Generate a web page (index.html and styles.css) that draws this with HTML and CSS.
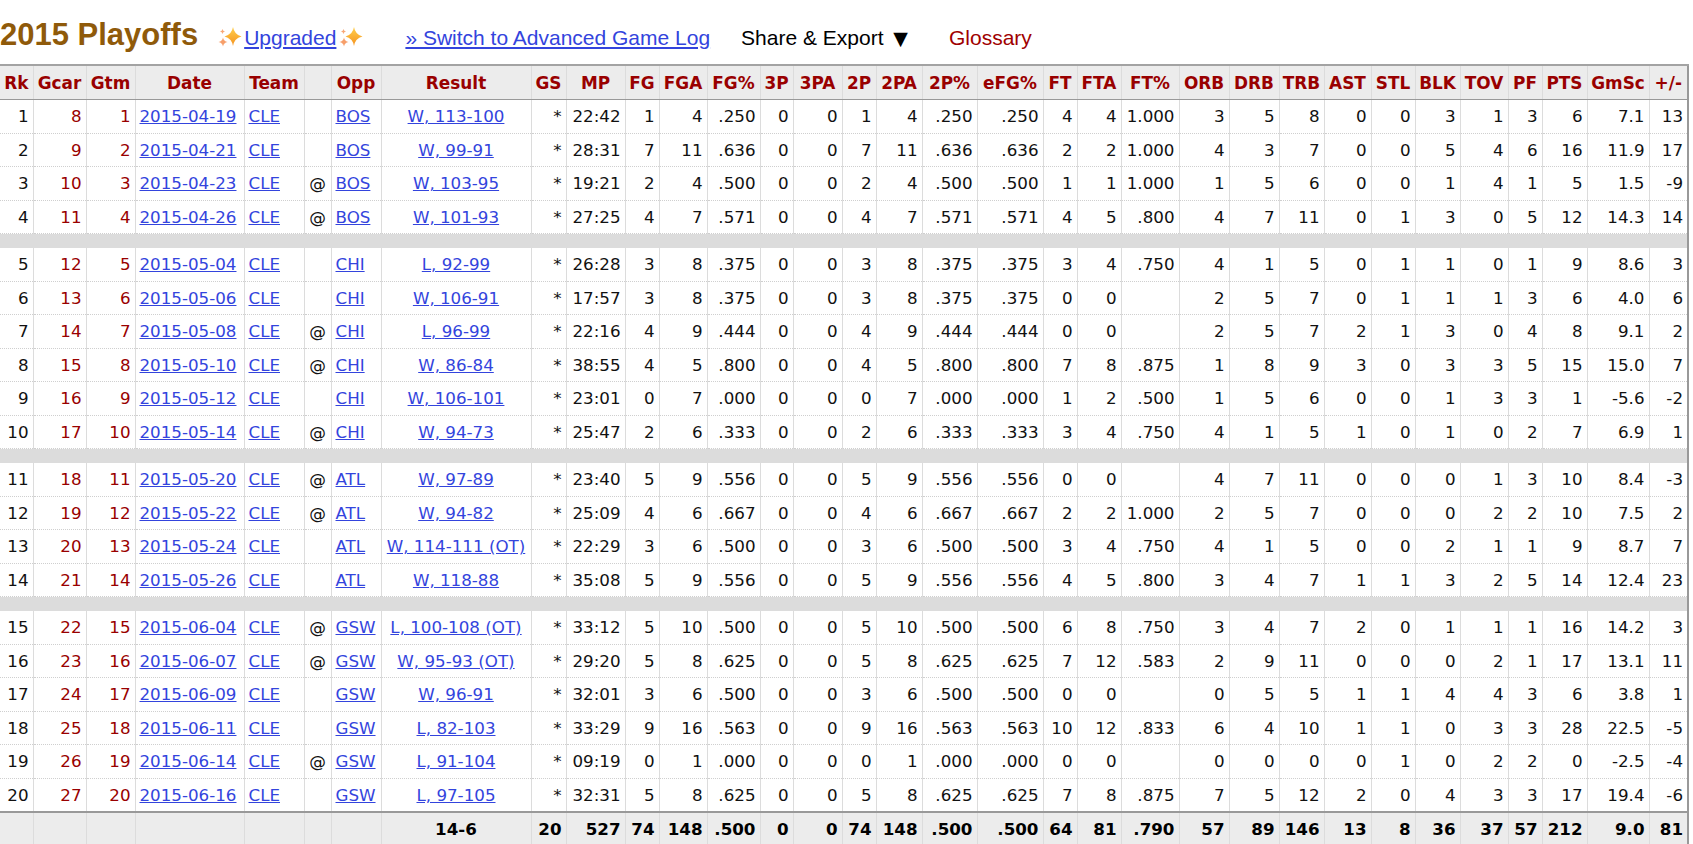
FILE: index.html
```html
<!DOCTYPE html>
<html lang="en">
<head>
<meta charset="utf-8">
<title>2015 Playoffs Game Log</title>
<link rel="stylesheet" href="styles.css">
</head>
<body>
<div class="top">
  <h1 class="title">2015 Playoffs</h1>
  <span class="upg">
    <svg class="spark" viewBox="0 0 24 20" width="24" height="20" aria-hidden="true">
      <defs>
        <linearGradient id="sg1" x1="0" y1="0" x2="0" y2="1">
          <stop offset="0" stop-color="#ffd04d"/>
          <stop offset="1" stop-color="#f5921f"/>
        </linearGradient>
      </defs>
      <path d="M15 0 Q16.3 7.7 23.5 9.5 Q16.3 11.3 15 19 Q13.7 11.3 6.5 9.5 Q13.7 7.7 15 0Z" fill="url(#sg1)"/>
      <path d="M5 10.5 Q5.7 14.3 9.5 15 Q5.7 15.7 5 19.5 Q4.3 15.7 0.5 15 Q4.3 14.3 5 10.5Z" fill="#f79f6a"/>
      <path d="M4.5 2 Q4.9 4.1 7 4.5 Q4.9 4.9 4.5 7 Q4.1 4.9 2 4.5 Q4.1 4.1 4.5 2Z" fill="#f8a877"/>
    </svg><a href="#" class="lnk">Upgraded</a><svg class="spark sp2" viewBox="0 0 24 20" width="24" height="20" aria-hidden="true">
      <path d="M15 0 Q16.3 7.7 23.5 9.5 Q16.3 11.3 15 19 Q13.7 11.3 6.5 9.5 Q13.7 7.7 15 0Z" fill="url(#sg1)"/>
      <path d="M5 10.5 Q5.7 14.3 9.5 15 Q5.7 15.7 5 19.5 Q4.3 15.7 0.5 15 Q4.3 14.3 5 10.5Z" fill="#f79f6a"/>
      <path d="M4.5 2 Q4.9 4.1 7 4.5 Q4.9 4.9 4.5 7 Q4.1 4.9 2 4.5 Q4.1 4.1 4.5 2Z" fill="#f8a877"/>
    </svg>
  </span>
  <a href="#" class="lnk switch">» Switch to Advanced Game Log</a>
  <span class="share">Share &amp; Export <span class="tri">▼</span></span>
  <a href="#" class="gloss">Glossary</a>
</div>

<table class="log">
<colgroup>
<col style="width:33px"><col style="width:53px"><col style="width:49px"><col style="width:109px"><col style="width:60px"><col style="width:27px"><col style="width:50px"><col style="width:150px"><col style="width:35px"><col style="width:59px"><col style="width:34px"><col style="width:48px"><col style="width:53px"><col style="width:33px"><col style="width:49px"><col style="width:34px"><col style="width:46px"><col style="width:55px"><col style="width:66px"><col style="width:34px"><col style="width:44px"><col style="width:58px"><col style="width:50px"><col style="width:50px"><col style="width:45px"><col style="width:47px"><col style="width:44px"><col style="width:45px"><col style="width:48px"><col style="width:34px"><col style="width:45px"><col style="width:62px"><col style="width:39px">
</colgroup>
<thead>
<tr><th>Rk</th><th>Gcar</th><th>Gtm</th><th>Date</th><th>Team</th><th></th><th>Opp</th><th>Result</th><th>GS</th><th>MP</th><th>FG</th><th>FGA</th><th>FG%</th><th>3P</th><th>3PA</th><th>2P</th><th>2PA</th><th>2P%</th><th>eFG%</th><th>FT</th><th>FTA</th><th>FT%</th><th>ORB</th><th>DRB</th><th>TRB</th><th>AST</th><th>STL</th><th>BLK</th><th>TOV</th><th>PF</th><th>PTS</th><th>GmSc</th><th>+/-</th></tr>
</thead>
<tbody>
<tr><td>1</td><td>8</td><td>1</td><td><a href="#">2015-04-19</a></td><td><a href="#">CLE</a></td><td></td><td><a href="#">BOS</a></td><td><a href="#">W, 113-100</a></td><td>*</td><td>22:42</td><td>1</td><td>4</td><td>.250</td><td>0</td><td>0</td><td>1</td><td>4</td><td>.250</td><td>.250</td><td>4</td><td>4</td><td>1.000</td><td>3</td><td>5</td><td>8</td><td>0</td><td>0</td><td>3</td><td>1</td><td>3</td><td>6</td><td>7.1</td><td>13</td></tr>
<tr><td>2</td><td>9</td><td>2</td><td><a href="#">2015-04-21</a></td><td><a href="#">CLE</a></td><td></td><td><a href="#">BOS</a></td><td><a href="#">W, 99-91</a></td><td>*</td><td>28:31</td><td>7</td><td>11</td><td>.636</td><td>0</td><td>0</td><td>7</td><td>11</td><td>.636</td><td>.636</td><td>2</td><td>2</td><td>1.000</td><td>4</td><td>3</td><td>7</td><td>0</td><td>0</td><td>5</td><td>4</td><td>6</td><td>16</td><td>11.9</td><td>17</td></tr>
<tr><td>3</td><td>10</td><td>3</td><td><a href="#">2015-04-23</a></td><td><a href="#">CLE</a></td><td>@</td><td><a href="#">BOS</a></td><td><a href="#">W, 103-95</a></td><td>*</td><td>19:21</td><td>2</td><td>4</td><td>.500</td><td>0</td><td>0</td><td>2</td><td>4</td><td>.500</td><td>.500</td><td>1</td><td>1</td><td>1.000</td><td>1</td><td>5</td><td>6</td><td>0</td><td>0</td><td>1</td><td>4</td><td>1</td><td>5</td><td>1.5</td><td>-9</td></tr>
<tr><td>4</td><td>11</td><td>4</td><td><a href="#">2015-04-26</a></td><td><a href="#">CLE</a></td><td>@</td><td><a href="#">BOS</a></td><td><a href="#">W, 101-93</a></td><td>*</td><td>27:25</td><td>4</td><td>7</td><td>.571</td><td>0</td><td>0</td><td>4</td><td>7</td><td>.571</td><td>.571</td><td>4</td><td>5</td><td>.800</td><td>4</td><td>7</td><td>11</td><td>0</td><td>1</td><td>3</td><td>0</td><td>5</td><td>12</td><td>14.3</td><td>14</td></tr>
<tr class="sp"><td colspan="33"></td></tr>
<tr><td>5</td><td>12</td><td>5</td><td><a href="#">2015-05-04</a></td><td><a href="#">CLE</a></td><td></td><td><a href="#">CHI</a></td><td><a href="#">L, 92-99</a></td><td>*</td><td>26:28</td><td>3</td><td>8</td><td>.375</td><td>0</td><td>0</td><td>3</td><td>8</td><td>.375</td><td>.375</td><td>3</td><td>4</td><td>.750</td><td>4</td><td>1</td><td>5</td><td>0</td><td>1</td><td>1</td><td>0</td><td>1</td><td>9</td><td>8.6</td><td>3</td></tr>
<tr><td>6</td><td>13</td><td>6</td><td><a href="#">2015-05-06</a></td><td><a href="#">CLE</a></td><td></td><td><a href="#">CHI</a></td><td><a href="#">W, 106-91</a></td><td>*</td><td>17:57</td><td>3</td><td>8</td><td>.375</td><td>0</td><td>0</td><td>3</td><td>8</td><td>.375</td><td>.375</td><td>0</td><td>0</td><td></td><td>2</td><td>5</td><td>7</td><td>0</td><td>1</td><td>1</td><td>1</td><td>3</td><td>6</td><td>4.0</td><td>6</td></tr>
<tr><td>7</td><td>14</td><td>7</td><td><a href="#">2015-05-08</a></td><td><a href="#">CLE</a></td><td>@</td><td><a href="#">CHI</a></td><td><a href="#">L, 96-99</a></td><td>*</td><td>22:16</td><td>4</td><td>9</td><td>.444</td><td>0</td><td>0</td><td>4</td><td>9</td><td>.444</td><td>.444</td><td>0</td><td>0</td><td></td><td>2</td><td>5</td><td>7</td><td>2</td><td>1</td><td>3</td><td>0</td><td>4</td><td>8</td><td>9.1</td><td>2</td></tr>
<tr><td>8</td><td>15</td><td>8</td><td><a href="#">2015-05-10</a></td><td><a href="#">CLE</a></td><td>@</td><td><a href="#">CHI</a></td><td><a href="#">W, 86-84</a></td><td>*</td><td>38:55</td><td>4</td><td>5</td><td>.800</td><td>0</td><td>0</td><td>4</td><td>5</td><td>.800</td><td>.800</td><td>7</td><td>8</td><td>.875</td><td>1</td><td>8</td><td>9</td><td>3</td><td>0</td><td>3</td><td>3</td><td>5</td><td>15</td><td>15.0</td><td>7</td></tr>
<tr><td>9</td><td>16</td><td>9</td><td><a href="#">2015-05-12</a></td><td><a href="#">CLE</a></td><td></td><td><a href="#">CHI</a></td><td><a href="#">W, 106-101</a></td><td>*</td><td>23:01</td><td>0</td><td>7</td><td>.000</td><td>0</td><td>0</td><td>0</td><td>7</td><td>.000</td><td>.000</td><td>1</td><td>2</td><td>.500</td><td>1</td><td>5</td><td>6</td><td>0</td><td>0</td><td>1</td><td>3</td><td>3</td><td>1</td><td>-5.6</td><td>-2</td></tr>
<tr><td>10</td><td>17</td><td>10</td><td><a href="#">2015-05-14</a></td><td><a href="#">CLE</a></td><td>@</td><td><a href="#">CHI</a></td><td><a href="#">W, 94-73</a></td><td>*</td><td>25:47</td><td>2</td><td>6</td><td>.333</td><td>0</td><td>0</td><td>2</td><td>6</td><td>.333</td><td>.333</td><td>3</td><td>4</td><td>.750</td><td>4</td><td>1</td><td>5</td><td>1</td><td>0</td><td>1</td><td>0</td><td>2</td><td>7</td><td>6.9</td><td>1</td></tr>
<tr class="sp"><td colspan="33"></td></tr>
<tr><td>11</td><td>18</td><td>11</td><td><a href="#">2015-05-20</a></td><td><a href="#">CLE</a></td><td>@</td><td><a href="#">ATL</a></td><td><a href="#">W, 97-89</a></td><td>*</td><td>23:40</td><td>5</td><td>9</td><td>.556</td><td>0</td><td>0</td><td>5</td><td>9</td><td>.556</td><td>.556</td><td>0</td><td>0</td><td></td><td>4</td><td>7</td><td>11</td><td>0</td><td>0</td><td>0</td><td>1</td><td>3</td><td>10</td><td>8.4</td><td>-3</td></tr>
<tr><td>12</td><td>19</td><td>12</td><td><a href="#">2015-05-22</a></td><td><a href="#">CLE</a></td><td>@</td><td><a href="#">ATL</a></td><td><a href="#">W, 94-82</a></td><td>*</td><td>25:09</td><td>4</td><td>6</td><td>.667</td><td>0</td><td>0</td><td>4</td><td>6</td><td>.667</td><td>.667</td><td>2</td><td>2</td><td>1.000</td><td>2</td><td>5</td><td>7</td><td>0</td><td>0</td><td>0</td><td>2</td><td>2</td><td>10</td><td>7.5</td><td>2</td></tr>
<tr><td>13</td><td>20</td><td>13</td><td><a href="#">2015-05-24</a></td><td><a href="#">CLE</a></td><td></td><td><a href="#">ATL</a></td><td><a href="#">W, 114-111 (OT)</a></td><td>*</td><td>22:29</td><td>3</td><td>6</td><td>.500</td><td>0</td><td>0</td><td>3</td><td>6</td><td>.500</td><td>.500</td><td>3</td><td>4</td><td>.750</td><td>4</td><td>1</td><td>5</td><td>0</td><td>0</td><td>2</td><td>1</td><td>1</td><td>9</td><td>8.7</td><td>7</td></tr>
<tr><td>14</td><td>21</td><td>14</td><td><a href="#">2015-05-26</a></td><td><a href="#">CLE</a></td><td></td><td><a href="#">ATL</a></td><td><a href="#">W, 118-88</a></td><td>*</td><td>35:08</td><td>5</td><td>9</td><td>.556</td><td>0</td><td>0</td><td>5</td><td>9</td><td>.556</td><td>.556</td><td>4</td><td>5</td><td>.800</td><td>3</td><td>4</td><td>7</td><td>1</td><td>1</td><td>3</td><td>2</td><td>5</td><td>14</td><td>12.4</td><td>23</td></tr>
<tr class="sp"><td colspan="33"></td></tr>
<tr><td>15</td><td>22</td><td>15</td><td><a href="#">2015-06-04</a></td><td><a href="#">CLE</a></td><td>@</td><td><a href="#">GSW</a></td><td><a href="#">L, 100-108 (OT)</a></td><td>*</td><td>33:12</td><td>5</td><td>10</td><td>.500</td><td>0</td><td>0</td><td>5</td><td>10</td><td>.500</td><td>.500</td><td>6</td><td>8</td><td>.750</td><td>3</td><td>4</td><td>7</td><td>2</td><td>0</td><td>1</td><td>1</td><td>1</td><td>16</td><td>14.2</td><td>3</td></tr>
<tr><td>16</td><td>23</td><td>16</td><td><a href="#">2015-06-07</a></td><td><a href="#">CLE</a></td><td>@</td><td><a href="#">GSW</a></td><td><a href="#">W, 95-93 (OT)</a></td><td>*</td><td>29:20</td><td>5</td><td>8</td><td>.625</td><td>0</td><td>0</td><td>5</td><td>8</td><td>.625</td><td>.625</td><td>7</td><td>12</td><td>.583</td><td>2</td><td>9</td><td>11</td><td>0</td><td>0</td><td>0</td><td>2</td><td>1</td><td>17</td><td>13.1</td><td>11</td></tr>
<tr><td>17</td><td>24</td><td>17</td><td><a href="#">2015-06-09</a></td><td><a href="#">CLE</a></td><td></td><td><a href="#">GSW</a></td><td><a href="#">W, 96-91</a></td><td>*</td><td>32:01</td><td>3</td><td>6</td><td>.500</td><td>0</td><td>0</td><td>3</td><td>6</td><td>.500</td><td>.500</td><td>0</td><td>0</td><td></td><td>0</td><td>5</td><td>5</td><td>1</td><td>1</td><td>4</td><td>4</td><td>3</td><td>6</td><td>3.8</td><td>1</td></tr>
<tr><td>18</td><td>25</td><td>18</td><td><a href="#">2015-06-11</a></td><td><a href="#">CLE</a></td><td></td><td><a href="#">GSW</a></td><td><a href="#">L, 82-103</a></td><td>*</td><td>33:29</td><td>9</td><td>16</td><td>.563</td><td>0</td><td>0</td><td>9</td><td>16</td><td>.563</td><td>.563</td><td>10</td><td>12</td><td>.833</td><td>6</td><td>4</td><td>10</td><td>1</td><td>1</td><td>0</td><td>3</td><td>3</td><td>28</td><td>22.5</td><td>-5</td></tr>
<tr><td>19</td><td>26</td><td>19</td><td><a href="#">2015-06-14</a></td><td><a href="#">CLE</a></td><td>@</td><td><a href="#">GSW</a></td><td><a href="#">L, 91-104</a></td><td>*</td><td>09:19</td><td>0</td><td>1</td><td>.000</td><td>0</td><td>0</td><td>0</td><td>1</td><td>.000</td><td>.000</td><td>0</td><td>0</td><td></td><td>0</td><td>0</td><td>0</td><td>0</td><td>1</td><td>0</td><td>2</td><td>2</td><td>0</td><td>-2.5</td><td>-4</td></tr>
<tr><td>20</td><td>27</td><td>20</td><td><a href="#">2015-06-16</a></td><td><a href="#">CLE</a></td><td></td><td><a href="#">GSW</a></td><td><a href="#">L, 97-105</a></td><td>*</td><td>32:31</td><td>5</td><td>8</td><td>.625</td><td>0</td><td>0</td><td>5</td><td>8</td><td>.625</td><td>.625</td><td>7</td><td>8</td><td>.875</td><td>7</td><td>5</td><td>12</td><td>2</td><td>0</td><td>4</td><td>3</td><td>3</td><td>17</td><td>19.4</td><td>-6</td></tr>
</tbody>
<tfoot>
<tr><td></td><td></td><td></td><td></td><td></td><td></td><td></td><td>14-6</td><td>20</td><td>527</td><td>74</td><td>148</td><td>.500</td><td>0</td><td>0</td><td>74</td><td>148</td><td>.500</td><td>.500</td><td>64</td><td>81</td><td>.790</td><td>57</td><td>89</td><td>146</td><td>13</td><td>8</td><td>36</td><td>37</td><td>57</td><td>212</td><td>9.0</td><td>81</td></tr>
</tfoot>
</table>
</body>
</html>
```

FILE: styles.css
```css
html, body {
  margin: 0;
  padding: 0;
  background: #fff;
}

body {
  font-family: "Liberation Sans", Arial, sans-serif;
  color: #000;
}

/* ---------- top bar ---------- */
.top {
  display: flex;
  align-items: baseline;
  height: 64px;
  box-sizing: border-box;
  padding-top: 17px;
  white-space: nowrap;
  font-size: 21px;
}

.title {
  margin: 0;
  font-size: 31px;
  font-weight: bold;
  color: #8f5a0a;
  line-height: normal;
}

.upg {
  margin-left: 20px;
}

.spark {
  vertical-align: -2px;
  margin-right: 2px;
}

.spark.sp2 {
  margin-right: 0;
  margin-left: 3px;
}

.lnk {
  color: #3344dd;
  text-decoration: underline;
}

.switch {
  margin-left: 42px;
}

.share {
  margin-left: 31px;
  color: #000;
}

.tri {
  font-family: "DejaVu Sans", sans-serif;
  font-size: 19px;
  margin-left: 4px;
}

.gloss {
  margin-left: 41px;
  color: #a00000;
  text-decoration: none;
  align-self: flex-start;
  margin-top: 9px;
}

/* ---------- table ---------- */
.log {
  border-collapse: collapse;
  table-layout: fixed;
  width: 1688px;
  font-family: "DejaVu Sans", Verdana, sans-serif;
  font-size: 16.7px;
  white-space: nowrap;
  border-right: 2px solid #999;
}

.log th,
.log td {
  padding: 0 4px;
  overflow: hidden;
}

.log thead th {
  background: #ececec;
  color: #990000;
  font-weight: bold;
  font-size: 16.9px;
  text-align: center;
  height: 33px;
  border-top: 2px solid #a3a3a3;
  border-bottom: 1px solid #999;
  border-right: 1px solid #dcdcdc;
  padding: 0 1px;
}

.log tbody tr {
  height: 33.5px;
}

.log tbody td {
  text-align: right;
  border-right: 1px solid #dcdcdc;
  border-bottom: 1px dotted #cfcfcf;
  color: #111;
}

.log tbody td:nth-child(2),
.log tbody td:nth-child(3) {
  color: #990000;
}

.log tbody td:nth-child(4),
.log tbody td:nth-child(5),
.log tbody td:nth-child(7) {
  text-align: left;
}

.log tbody td:nth-child(6),
.log tbody td:nth-child(8) {
  text-align: center;
}

.log a {
  color: #3344dd;
  text-decoration: underline;
}

.log tbody tr.sp {
  height: 14px;
}

.log tbody tr.sp td {
  background: #dcdcdc;
  border: none;
  padding: 0;
}

.log tfoot td {
  background: #ececec;
  font-weight: bold;
  text-align: right;
  height: 32px;
  border-top: 2px solid #999;
  border-bottom: 2px solid #999;
  border-right: 1px solid #dcdcdc;
}

.log tfoot td:nth-child(8) {
  text-align: center;
}
```
